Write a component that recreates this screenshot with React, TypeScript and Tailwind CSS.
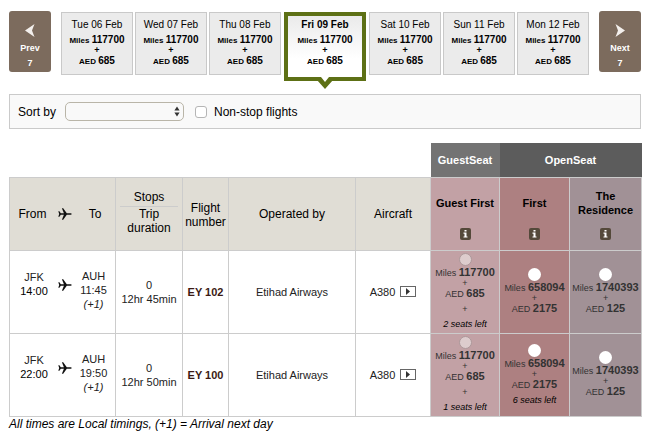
import React from 'react';
import clsx from 'clsx';

interface Fare {
  miles: string;
  aed: string;
  seatsLeft?: number;
  extraPlus?: boolean;
}

interface Flight {
  number: string;
  departs: string;
  arrives: string;
  duration: string;
  fares: Fare[];
}

const days = ['Tue 06 Feb', 'Wed 07 Feb', 'Thu 08 Feb', 'Fri 09 Feb', 'Sat 10 Feb', 'Sun 11 Feb', 'Mon 12 Feb'];
const selectedDay = 3;

const flights: Flight[] = [
  {
    number: 'EY 102',
    departs: '14:00',
    arrives: '11:45',
    duration: '12hr 45min',
    fares: [
      { miles: '117700', aed: '685', seatsLeft: 2, extraPlus: true },
      { miles: '658094', aed: '2175' },
      { miles: '1740393', aed: '125' },
    ],
  },
  {
    number: 'EY 100',
    departs: '22:00',
    arrives: '19:50',
    duration: '12hr 50min',
    fares: [
      { miles: '117700', aed: '685', seatsLeft: 1, extraPlus: true },
      { miles: '658094', aed: '2175', seatsLeft: 6 },
      { miles: '1740393', aed: '125' },
    ],
  },
];

const cabins = [
  { name: 'Guest First', bg: 'bg-[#c2a1a5]' },
  { name: 'First', bg: 'bg-[#ad8081]' },
  { name: 'The Residence', bg: 'bg-[#a19196]' },
];

const Plane = () => (
  <svg viewBox="0 0 14 12" className="h-3 w-3.5" fill="#111" aria-hidden="true">
    <path d="M13.8 6c0-.5-.8-.8-1.6-.8H8.8L5.2.2H3.9l2 5H2.8L1.4 3.2H.3L1.2 6 .3 8.8h1.1l1.4-2h3.1l-2 5h1.3l3.6-5h3.4c.8 0 1.6-.3 1.6-.8z" />
  </svg>
);

const PageButton = ({ label, direction }: { label: string; direction: 'prev' | 'next' }) => (
  <button
    type="button"
    className="flex h-[61px] w-[42px] shrink-0 flex-col items-center rounded-[3px] bg-[#7c6b5d] pt-[13px] text-[9px] leading-[15px] font-bold text-white"
  >
    <svg viewBox="0 0 10 13" className="mb-1 h-[13px] w-2.5" fill="#f3efec" aria-hidden="true">
      {direction === 'prev' ? <path d="M9.5 0 0 6.5 9.5 13 7 6.5z" /> : <path d="M.5 0 10 6.5.5 13 3 6.5z" />}
    </svg>
    <span>{label}</span>
    <span>7</span>
  </button>
);

const DayCard = ({ date, selected }: { date: string; selected: boolean }) => (
  <button
    type="button"
    className={clsx(
      'relative flex flex-1 flex-col items-center text-black',
      selected
        ? 'mx-px mt-px h-[69px] grow-[1.06] border-4 border-[#5d7015] bg-linear-to-b from-[#eaeaea] to-white to-70% pt-[2px]'
        : 'mt-px h-[63px] border border-[#c9c9c9] bg-[#ebebeb] pt-[5px]'
    )}
  >
    <span className={clsx('text-[10px] leading-[14px] whitespace-nowrap', selected && 'font-bold')}>{date}</span>
    <span className="mt-[2px] text-[8px] leading-3 font-bold whitespace-nowrap">
      Miles <span className="text-[10px]">117700</span>
    </span>
    <span className="text-[9px] leading-[6px] font-bold">+</span>
    <span className="mt-[2px] text-[8px] leading-3 font-bold whitespace-nowrap">
      AED <span className="text-[10px]">685</span>
    </span>
    {selected && (
      <svg viewBox="0 0 16 13" className="absolute top-full left-1/2 h-[13px] w-4 -translate-x-1/2" aria-hidden="true">
        <path d="M3 0h10L8 6z" fill="#fff" />
        <path d="M0 0h4l4 5 4-5h4v3L8 12 0 3z" fill="#5d7015" />
      </svg>
    )}
  </button>
);

const InfoButton = ({ cabin }: { cabin: string }) => (
  <button
    type="button"
    aria-label={`About ${cabin}`}
    className="flex h-3 w-[11px] items-center justify-center rounded-xs bg-[#54493a]"
  >
    <svg viewBox="0 0 5 8" className="h-2 w-[5px]" fill="#fff" aria-hidden="true">
      <path d="M1.5 0h2v1.6h-2zM.5 2.6h3v3.8h1v1.2h-4V6.4h1V3.8h-1z" />
    </svg>
  </button>
);

const FareCell = ({ fare, label, muted }: { fare: Fare; label: string; muted: boolean }) => (
  <label className="flex flex-col items-center text-[9px] text-[#333]">
    <input
      type="radio"
      name="fare"
      aria-label={label}
      className={clsx(
        'h-[13px] w-[13px] appearance-none rounded-full checked:border-4',
        muted ? 'border border-[#ad989a] bg-[#ddcccd]' : 'bg-white shadow-xs'
      )}
    />
    <span className="leading-3 whitespace-nowrap">
      Miles <b className="text-[11px]">{fare.miles}</b>
    </span>
    <span className="leading-2">+</span>
    <span className="leading-3 whitespace-nowrap">
      AED <b className="text-[11px]">{fare.aed}</b>
    </span>
    {fare.extraPlus && <span className="mt-[3px] leading-3">+</span>}
    {fare.seatsLeft && <i className="mt-[3px] leading-3 text-black">{fare.seatsLeft} seats left</i>}
  </label>
);

const App = () => {
  return (
    <main className="bg-white px-[9px] pt-[11px] pb-3 font-['Liberation_Sans',Arial,sans-serif] text-[11px] text-black">
      <nav className="flex h-[69px] items-start justify-between gap-[10px]" aria-label="Travel dates">
        <PageButton label="Prev" direction="prev" />
        <div className="flex flex-1 items-start gap-[2px]">
          {days.map((day, i) => (
            <DayCard key={day} date={day} selected={i === selectedDay} />
          ))}
        </div>
        <PageButton label="Next" direction="next" />
      </nav>

      {/* Sort and filter */}
      <div className="mt-[14px] flex h-[35px] items-center border border-[#cacaca] bg-[#f9f9f9] pl-2 text-[12px]">
        <label htmlFor="sort">Sort by</label>
        <div className="relative ml-[9px]">
          <select
            id="sort"
            defaultValue=""
            className="block h-[19px] w-[119px] appearance-none rounded-[5px] border border-[#b9b5a8] bg-[#f9f9f9] px-2 text-[11px]"
          >
            <option value=""></option>
          </select>
          <svg viewBox="0 0 6 10" className="pointer-events-none absolute top-1 right-1 h-[11px] w-1.5" fill="#333" aria-hidden="true">
            <path d="M3 0l2.6 4H.4zM3 10L.4 6h5.2z" />
          </svg>
        </div>
        <input
          id="nonstop"
          type="checkbox"
          className="ml-[11px] h-3 w-3 appearance-none rounded-[3px] border border-[#b5b5b5] bg-white checked:bg-[#5d7015]"
        />
        <label htmlFor="nonstop" className="ml-[7px]">Non-stop flights</label>
      </div>

      {/* Results */}
      <table className="mt-[14px] w-full table-fixed border-collapse text-center">
        <colgroup>
          <col className="w-[106px]" />
          <col className="w-[67px]" />
          <col className="w-[46px]" />
          <col className="w-[127px]" />
          <col className="w-[75px]" />
          <col className="w-[69px]" />
          <col className="w-[70px]" />
          <col className="w-[72px]" />
        </colgroup>
        <thead>
          <tr className="h-[34px] text-[11px] text-white">
            <td colSpan={5}></td>
            <th scope="colgroup" className="bg-[#737373] p-0">GuestSeat</th>
            <th scope="colgroup" colSpan={2} className="bg-[#5c5c5c] p-0">OpenSeat</th>
          </tr>
          <tr className="h-[73px] bg-[#e0ddd5] text-[12px] leading-[14px] *:border *:border-[#ccc] *:p-0">
            <th scope="col" className="font-normal">
              <div className="grid grid-cols-[45px_20px_1fr] items-center justify-items-center">
                <span>From</span>
                <Plane />
                <span>To</span>
              </div>
            </th>
            <th scope="col" className="font-normal">
              <div className="mx-1 border-b border-[#ccc] pb-[2px]">Stops</div>
              <div className="pb-[3px]">Trip<br />duration</div>
            </th>
            <th scope="col" className="pt-[3px]! font-normal">Flight<br />number</th>
            <th scope="col" className="font-normal">Operated by</th>
            <th scope="col" className="font-normal">Aircraft</th>
            {cabins.map((cabin) => (
              <th key={cabin.name} scope="col" className={clsx('align-bottom text-[11px]', cabin.bg)}>
                <div className="flex flex-col items-center gap-1 pb-[10px]">
                  <div className="flex h-[42px] items-center">{cabin.name}</div>
                  <InfoButton cabin={cabin.name} />
                </div>
              </th>
            ))}
          </tr>
        </thead>
        <tbody>
          {flights.map((flight) => (
            <tr key={flight.number} className="h-[83px] leading-[14px] text-[#222] *:border *:border-[#ccc] *:p-0">
              <td>
                <div className="grid grid-cols-[48px_14px_1fr] items-center justify-items-center pb-1">
                  <span className="pb-3">JFK<br /><span className="text-black">{flight.departs}</span></span>
                  <span className="pb-[9px]"><Plane /></span>
                  <span>AUH<br />{flight.arrives}<br /><i>(+1)</i></span>
                </div>
              </td>
              <td>0<br />{flight.duration}</td>
              <td className="font-bold text-[#3b1a14]">{flight.number}</td>
              <td>Etihad Airways</td>
              <td>
                <div className="flex items-center justify-center gap-[5px]">
                  A380
                  <button type="button" aria-label="View A380" className="flex h-[11px] w-4 items-center justify-center border border-[#666]">
                    <svg viewBox="0 0 4 7" className="h-[7px] w-1" fill="#333" aria-hidden="true">
                      <path d="M0 0l4 3.5L0 7z" />
                    </svg>
                  </button>
                </div>
              </td>
              {flight.fares.map((fare, i) => (
                <td key={cabins[i].name} className={cabins[i].bg}>
                  <FareCell fare={fare} label={`${cabins[i].name} on ${flight.number}`} muted={i === 0} />
                </td>
              ))}
            </tr>
          ))}
        </tbody>
      </table>
      <p className="text-[12px] leading-[14px] italic">All times are Local timings, (+1) = Arrival next day</p>
    </main>
  );
};

export default App;
